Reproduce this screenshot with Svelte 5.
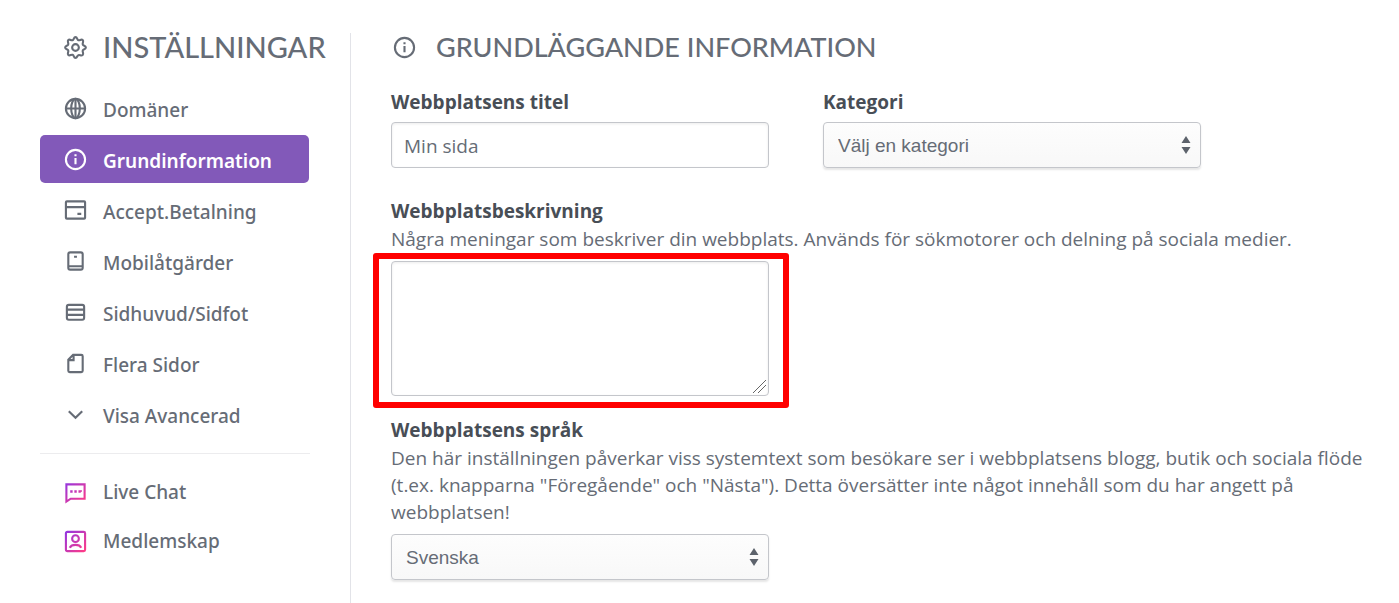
<script lang="ts">
  type Item = {label: string, icon: string};

  const pages: Item[] = [
    {label: "Domäner", icon: "globe"},
    {label: "Grundinformation", icon: "info"},
    {label: "Accept.Betalning", icon: "card"},
    {label: "Mobilåtgärder", icon: "mobile"},
    {label: "Sidhuvud/Sidfot", icon: "rows"},
    {label: "Flera Sidor", icon: "page"},
    {label: "Visa Avancerad", icon: "chevron"},
  ];
  const extras: Item[] = [
    {label: "Live Chat", icon: "chat"},
    {label: "Medlemskap", icon: "member"},
  ];

  let active = $state("Grundinformation");
  let title = $state("Min sida");
  let description = $state("");
  let category = $state("");
  let language = $state("sv");
</script>

{#snippet icon(name: string)}
  <svg class="icon" viewBox="0 0 24 24" aria-hidden="true">
    {#if name === "gear"}
      <path d="M12 1.200C14 1.200 13.400 3.800 15 4.400S18 2.700 19.500 4.200 18.900 7.500 19.600 9s3.200 1 3.200 3-2.500 1.500-3.200 3 1.400 3.300-.1 4.800-2.900-.4-4.500.2-1 2.800-3 2.800-1.400-2.600-3-3.200-3 1.700-4.500.2.600-3.300-.1-4.800-3.200-1-3.200-3 2.500-1.500 3.200-3-1.400-3.300.1-4.800 2.900.8 4.500.2 1-3.200 3-3.200z" />
      <circle cx="12" cy="12" r="3.500" />
    {:else if name === "globe"}
      <circle cx="12" cy="12" r="10" />
      <ellipse cx="12" cy="12" rx="4.500" ry="10" />
      <path d="M12 2v20M2 12h20" />
    {:else if name === "info"}
      <circle cx="12" cy="12" r="10" />
      <path d="M12 10.500v6.500M12 6.500v2.200" />
    {:else if name === "card"}
      <rect x="2" y="2.500" width="20" height="18" rx="1" />
      <path d="M2 8.500h20M14 15.500h4" />
    {:else if name === "mobile"}
      <rect x="4.500" y="2.500" width="15" height="18" rx="2" />
      <path d="M5 17h14M10.500 7h3" />
    {:else if name === "rows"}
      <rect x="3" y="4" width="18" height="15.500" rx="2" />
      <path d="M3 9h18M3 14.500h18" />
    {:else if name === "page"}
      <path d="M9.500 3H18a1.500 1.500 0 0 1 1.500 1.500v15A1.500 1.500 0 0 1 18 21H6a1.500 1.500 0 0 1-1.500-1.500V8zM10 3v5.500H4.500" />
    {:else if name === "chevron"}
      <path d="M5 8.500l7 7 7-7" />
    {:else if name === "chat"}
      <path class="gradient" d="M2.500 3.500h19v15H7l-4.500 3z" />
      <path class="gradient dots" d="M6.500 11h11v.1" />
    {:else if name === "member"}
      <rect class="gradient" x="2" y="2" width="20" height="20" rx="1.500" />
      <circle class="gradient" cx="12" cy="9" r="3.500" />
      <path class="gradient" d="M6 18.500c2-4 10-4 12 0" />
    {/if}
  </svg>
{/snippet}

{#snippet links(items: Item[])}
  {#each items as item}
    <li>
      <a
        href="#{item.icon}"
        class:active={active === item.label}
        onclick={() => active = item.label}
      >
        {@render icon(item.icon)}
        <span>{item.label}</span>
      </a>
    </li>
  {/each}
{/snippet}

<!-- Shared stroke for the purple to pink icons -->
<svg class="defs" width="0" height="0" aria-hidden="true">
  <linearGradient id="brand" gradientUnits="userSpaceOnUse" x1="2" y1="2" x2="22" y2="22">
    <stop offset="0" stop-color="#9436df" />
    <stop offset="1" stop-color="#ff3b86" />
  </linearGradient>
</svg>

<div class="settings">
  <nav>
    <h1>{@render icon("gear")}<span>INSTÄLLNINGAR</span></h1>
    <ul class="pages">{@render links(pages)}</ul>
    <ul class="extras">{@render links(extras)}</ul>
  </nav>

  <main>
    <h2>{@render icon("info")}<span>GRUNDLÄGGANDE INFORMATION</span></h2>

    <div class="row">
      <div class="field">
        <label for="title">Webbplatsens titel</label>
        <input id="title" type="text" bind:value={title} />
      </div>
      <div class="field">
        <label for="category">Kategori</label>
        <div class="select">
          <select id="category" bind:value={category}>
            <option value="">Välj en kategori</option>
          </select>
          <svg class="arrows" viewBox="0 0 10 20" aria-hidden="true"><path d="M5 1l4.500 7h-9zM5 19l4.500-7h-9z" /></svg>
        </div>
      </div>
    </div>

    <div class="field description">
      <label for="description">Webbplatsbeskrivning</label>
      <p>Några meningar som beskriver din webbplats. Används för sökmotorer och delning på sociala medier.</p>
      <div class="highlight control">
        <textarea id="description" bind:value={description}></textarea>
      </div>
    </div>

    <div class="field">
      <label for="language">Webbplatsens språk</label>
      <p>Den här inställningen påverkar viss systemtext som besökare ser i webbplatsens blogg, butik och sociala flöde (t.ex. knapparna "Föregående" och "Nästa"). Detta översätter inte något innehåll som du har angett på webbplatsen!</p>
      <div class="select control">
        <select id="language" bind:value={language}>
          <option value="sv">Svenska</option>
        </select>
        <svg class="arrows" viewBox="0 0 10 20" aria-hidden="true"><path d="M5 1l4.500 7h-9zM5 19l4.500-7h-9z" /></svg>
      </div>
    </div>
  </main>
</div>

<style>
  :global(body) {
    background: #fff;
    color: #666c76;
    font-family: "Open Sans", "Noto Sans", sans-serif;
    font-size: 19px;
  }
  .defs {position: absolute}
  .settings {
    display: flex;
    min-height: 100vh;
    box-sizing: border-box;
    padding: 33px 32px 0 40px;
  }

  nav {
    flex: 0 0 270px;
    min-width: 0;
    padding-right: 40px;
    border-right: 1px solid #e2e3e8;
  }
  h1, h2 {
    display: flex;
    align-items: center;
    margin: 0;
    font-family: Lato, sans-serif;
    font-weight: 500;
    line-height: 28px;
    white-space: nowrap;
  }
  h1 {
    gap: 16px;
    padding-left: 24px;
    font-size: 29px;
  }
  h2 {
    gap: 20px;
    padding-left: 2px;
    font-size: 27px;
  }

  .icon {
    flex: none;
    width: 23px;
    height: 23px;
    fill: none;
    stroke: currentColor;
    stroke-width: 2.2;
  }
  .gradient {stroke: url(#brand)}
  .dots {
    stroke-width: 2.5;
    stroke-dasharray: 2.500 1.800;
  }

  ul {
    display: grid;
    gap: 3px;
    margin: 0;
    padding: 23px 0 15px;
    list-style: none;
  }
  ul.extras {
    gap: 1px;
    border-top: 1px solid #ececee;
    padding-top: 14px;
  }
  a {
    display: flex;
    align-items: center;
    gap: 16px;
    height: 48px;
    margin-right: 1px;
    padding-left: 24px;
    border-radius: 5px;
    color: inherit;
    font-family: "Noto Sans", "Open Sans", sans-serif;
    font-weight: 500;
    text-decoration: none;
  }
  .pages span {padding-top: 3px}
  a.active {
    background: #8259b9;
    color: #fff;
    font-weight: 600;
  }

  main {
    flex: 1;
    min-width: 0;
    padding-left: 40px;
  }
  .row {
    display: grid;
    grid-template-columns: repeat(2, minmax(0, 378px));
    gap: 54px;
    margin: 27px 0 29px;
  }
  label {
    display: block;
    color: #484e56;
    font-weight: 700;
    line-height: 28px;
  }
  p {
    margin: 1px 0 0;
    line-height: 27px;
  }
  .row label {margin-bottom: 6px}
  .description {margin-bottom: 20px}
  .control {
    max-width: 378px;
    margin-top: 8px;
  }
  input, textarea, select {
    display: block;
    box-sizing: border-box;
    width: 100%;
    height: 46px;
    margin: 0;
    padding: 2px 12px 0;
    border: 1px solid #c4c6cb;
    border-radius: 4px;
    background: #fff;
    box-shadow: inset 0 1px 3px #00000014;
    color: inherit;
    font: inherit;
  }
  textarea {
    height: 135px;
    padding: 12px;
    resize: both;
  }
  textarea::-webkit-resizer {
    background: linear-gradient(135deg, transparent 47%, #666 47% 50%, transparent 50% 68%, #666 68% 71%, transparent 71%) no-repeat 0 0 / 13px 13px;
  }
  .select {position: relative}
  select {
    appearance: none;
    padding: 0 14px;
    background: linear-gradient(#fdfdfd, #f8f8f8);
    box-shadow: 0 2px 2px #0000001a;
    font-family: "Liberation Sans", Arial, sans-serif;
  }
  .arrows {
    position: absolute;
    top: 13px;
    right: 10px;
    width: 10px;
    height: 20px;
    fill: #5d636c;
    pointer-events: none;
  }

  .highlight {position: relative}
  .highlight::after {
    content: "";
    position: absolute;
    inset: -8px -20px -12px -18px;
    border: 6px solid #f00;
    border-radius: 3px;
    pointer-events: none;
  }
</style>
